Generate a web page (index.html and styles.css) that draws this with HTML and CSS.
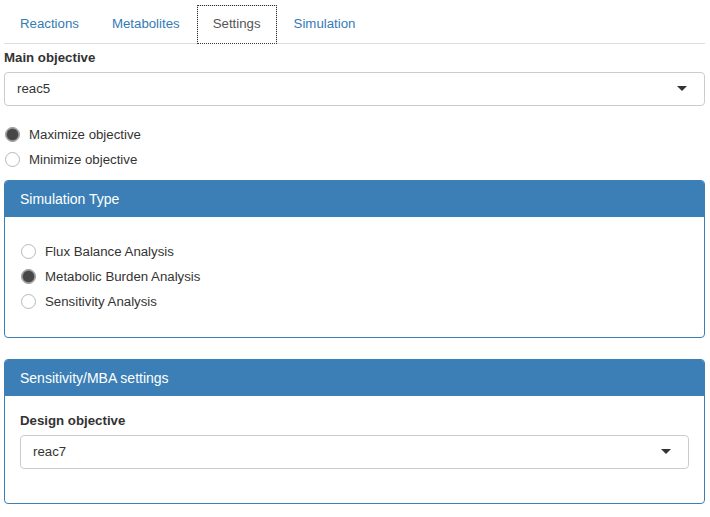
FILE: index.html
```html
<!DOCTYPE html>
<html>
<head>
<meta charset="utf-8">
<link rel="stylesheet" href="styles.css">
</head>
<body>
<div class="page">
  <ul class="tabs">
    <li class="tab">Reactions</li>
    <li class="tab">Metabolites</li>
    <li class="tab active">Settings</li>
    <li class="tab">Simulation</li>
  </ul>
  <div class="content">
    <div class="label label-main">Main objective</div>
    <div class="select"><span class="select-text">reac5</span><span class="arrow"></span></div>
    <div class="radios radios-main">
      <div class="radio"><span class="circle checked"></span><span class="radio-text">Maximize objective</span></div>
      <div class="radio"><span class="circle"></span><span class="radio-text">Minimize objective</span></div>
    </div>
    <div class="panel">
      <div class="panel-heading">Simulation Type</div>
      <div class="panel-body body-sim">
        <div class="radios">
          <div class="radio"><span class="circle"></span><span class="radio-text">Flux Balance Analysis</span></div>
          <div class="radio"><span class="circle checked"></span><span class="radio-text">Metabolic Burden Analysis</span></div>
          <div class="radio"><span class="circle"></span><span class="radio-text">Sensitivity Analysis</span></div>
        </div>
      </div>
    </div>
    <div class="panel">
      <div class="panel-heading">Sensitivity/MBA settings</div>
      <div class="panel-body body-mba">
        <div class="label">Design objective</div>
        <div class="select"><span class="select-text">reac7</span><span class="arrow"></span></div>
      </div>
    </div>
  </div>
</div>
</body>
</html>
```
FILE: styles.css
```css
html, body {
  margin: 0;
  padding: 0;
  background: #fff;
}
body {
  font-family: "Liberation Sans", Arial, sans-serif;
  font-size: 13.25px;
  color: #333;
}
.page {
  padding: 0 5px 0 4px;
}
.tabs {
  display: flex;
  list-style: none;
  margin: 0;
  padding: 5px 0 0 0;
  border-bottom: 1px solid #ddd;
}
.tab {
  padding: 8px 15px 10px;
  line-height: 19px;
  margin-right: 1px;
  margin-bottom: -1px;
  border: 1px solid transparent;
  color: #337ab7;
}
.tab.active {
  color: #555;
  background: #fff;
  border-color: #ddd;
  border-bottom-color: #fff;
  outline: 1px dotted #333;
  outline-offset: -1px;
}
.label {
  font-weight: bold;
  line-height: 19px;
  margin-bottom: 5px;
}
.label-main {
  margin-top: 4px;
  margin-bottom: 5px;
}
.select {
  display: flex;
  align-items: center;
  height: 34px;
  box-sizing: border-box;
  border: 1px solid #ccc;
  border-radius: 4px;
  padding: 0 12px;
  background: #fff;
}
.select-text {
  flex: 1;
  line-height: 32px;
}
.arrow {
  width: 0;
  height: 0;
  border-left: 5px solid transparent;
  border-right: 5px solid transparent;
  border-top: 5px solid #333;
  margin-right: 5px;
  margin-top: -2px;
}
.radios {
  display: flex;
  flex-direction: column;
  gap: 6px;
}
.radios-main {
  margin-top: 19px;
  margin-bottom: 11px;
}
.radio {
  display: flex;
  align-items: center;
  line-height: 19px;
}
.circle {
  width: 15px;
  height: 15px;
  box-sizing: border-box;
  border-radius: 50%;
  border: 1px solid #b8b8b8;
  background: #fff;
  margin-left: 1px;
  margin-top: -1px;
  flex: none;
}
.circle.checked {
  border-color: #8f8f8f;
  background: radial-gradient(circle, #474747 0, #474747 5px, #6e6e6e 5.8px, #e2e2e2 6.8px);
}
.radio-text {
  margin-left: 9px;
}
.panel {
  border: 1px solid #3b7fb6;
  border-radius: 4px;
  margin-bottom: 21px;
  overflow: hidden;
}
.panel-heading {
  background: #3b7fb6;
  color: #fff;
  font-size: 14px;
  height: 35px;
  line-height: 36px;
  padding: 0 15px;
  border-bottom: 1px solid #3b7fb6;
}
.panel-body {
  padding: 15px;
}
.body-sim {
  padding: 25px 15px 26px;
}
.body-mba {
  padding: 15px 15px 34px;
}
```
